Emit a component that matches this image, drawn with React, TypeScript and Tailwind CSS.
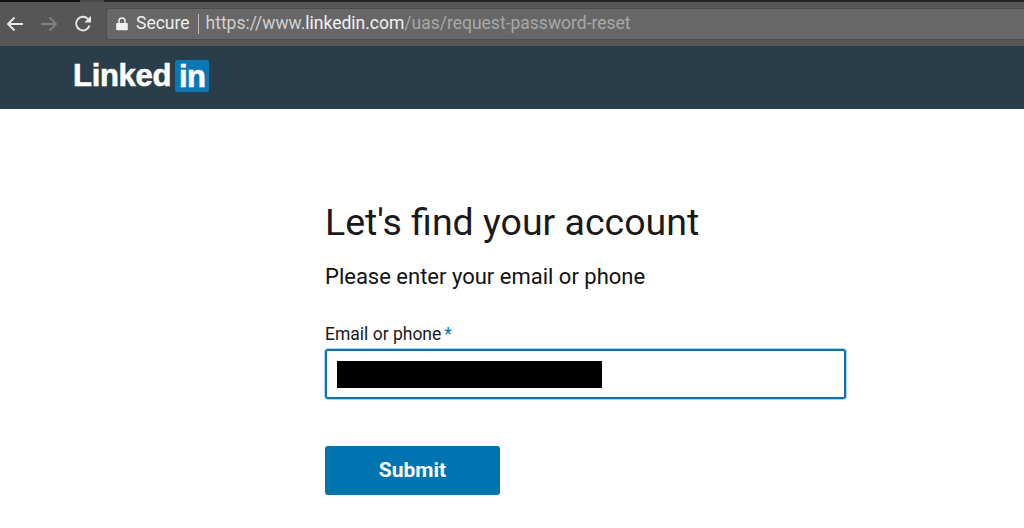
const sans = "font-['Roboto','Liberation_Sans',sans-serif]";

function BrowserBar() {
  return (
    <div className="h-[46px] bg-[#565656] flex flex-col">
      {/* tab strip edge */}
      <div className="h-[2px] bg-[#4a4a4a] flex">
        <div className="w-[80px] bg-[#111]" />
        <div className="w-[24px]" />
        <div className="flex-1 bg-[#222]" />
      </div>
      <div className="flex-1 flex items-center">
        <div className="w-[106px] pl-[6px] flex items-center gap-[16px] shrink-0">
          <svg width="18" height="18" viewBox="0 0 18 18" fill="none" stroke="#e8e8e8" strokeWidth="1.9">
            <path d="M17 9H2M8.500 2.500 2 9l6.500 6.500" />
          </svg>
          <svg width="18" height="18" viewBox="0 0 18 18" fill="none" stroke="#808080" strokeWidth="1.9">
            <path d="M1 9h15M9.500 2.500 16 9l-6.500 6.500" />
          </svg>
          <svg width="18" height="18" viewBox="0 0 18 18" fill="none" stroke="#e8e8e8" strokeWidth="1.9">
            <path d="M15.500 10.500A6.800 6.800 0 1 1 13.800 3.800L15.800 6" />
            <path d="M17 .8v6.700h-6.700" fill="#e8e8e8" stroke="none" />
          </svg>
        </div>
        <div className="flex-1 h-[32px] mb-[1px] bg-[#676767] border border-[#4c4c4c] border-r-0 rounded-l-[3px] flex items-center pl-[9px] text-[17.500px]">
          <svg width="12" height="14" viewBox="0 0 12 14" fill="#f0f0f0" className="shrink-0">
            <path d="M1 6h10a.8.8 0 0 1 .8.800v5.700a.8.8 0 0 1-.8.800H1a.8.8 0 0 1-.8-.8V6.800A.8.8 0 0 1 1 6Z" />
            <path d="M3 6V4a3 3 0 0 1 6 0v2" fill="none" stroke="#f0f0f0" strokeWidth="1.500" />
          </svg>
          <span className="ml-[8px] text-[#efefef]">Secure</span>
          <span className="ml-[8px] w-px h-[20px] bg-[#c0c0c0]" />
          <span className="ml-[7px] text-[#d0d0d0]">https://www.</span>
          <span className="text-[#f2f2f2]">linkedin.com</span>
          <span className="text-[#a8a8a8]">/uas/request-password-reset</span>
        </div>
      </div>
    </div>
  );
}

function SiteHeader() {
  return (
    <div className="h-[63px] bg-[#2a3d4b] pl-[73px] pt-[14px]">
      <div className="flex items-start">
        <span className="text-white font-bold text-[31px] leading-[32px] tracking-[-0.3px] [-webkit-text-stroke:0.6px_white] font-['Liberation_Sans',sans-serif]">Linked</span>
        <span className="ml-[4px] w-[34px] h-[32px] bg-[#0a78b5] rounded-[2px] text-white font-bold text-[31px] leading-[33px] tracking-[-0.6px] [-webkit-text-stroke:0.6px_white] text-center font-['Liberation_Sans',sans-serif]">in</span>
      </div>
    </div>
  );
}

export default function App() {
  return (
    <div className={`w-[1024px] h-[528px] bg-white overflow-hidden ${sans}`}>
      <BrowserBar />
      <SiteHeader />
      <main className="pl-[325px] pt-[90px] w-[846px]">
        <h1 className="text-[37.500px] leading-[46px] text-[#191919]">Let's find your account</h1>
        <p className="mt-[18px] text-[22px] leading-[28px] text-[#111]">Please enter your email or phone</p>
        <label className="block mt-[31px] text-[17.500px] leading-[24px] text-[#191919]">
          Email or phone<span className="ml-[3px] text-[#0073b1]">*</span>
        </label>
        <div className="mt-[3px] h-[50px] border-2 border-[#0f73a8] rounded-[3px] shadow-[0_0_0_1px_#a8d4ec] flex items-center pl-[10px]">
          <div className="w-[265px] h-[27px] bg-black" />
        </div>
        <button className="mt-[47px] w-[175px] h-[49px] bg-[#0073b1] rounded-[3px] text-white font-bold text-[21px]">
          Submit
        </button>
      </main>
    </div>
  );
}
